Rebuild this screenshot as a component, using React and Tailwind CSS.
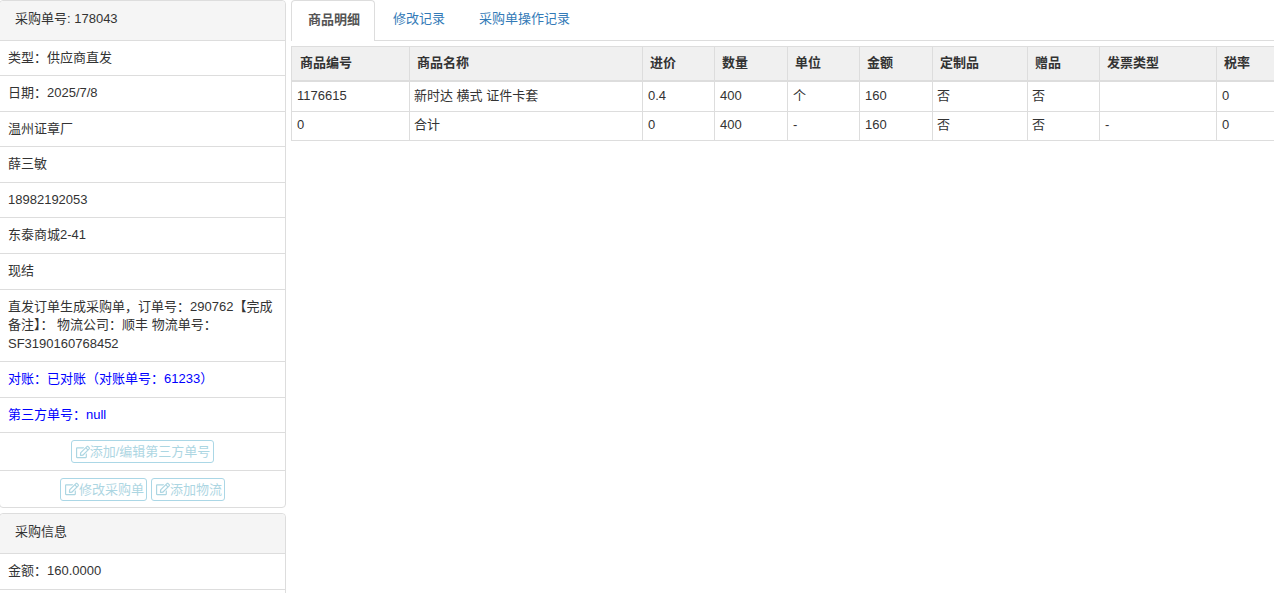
import { FaRegEdit } from "react-icons/fa";

const font = { fontFamily: '"Liberation Sans", "Noto Sans CJK SC", sans-serif' };

const infoRows = [
  "类型：供应商直发",
  "日期：2025/7/8",
  "温州证章厂",
  "薛三敏",
  "18982192053",
  "东泰商城2-41",
  "现结",
  "直发订单生成采购单，订单号：290762【完成备注】： 物流公司：顺丰 物流单号：SF3190160768452",
];

const headers = [
  ["商品编号", "w-[118px]"],
  ["商品名称", "w-[233px]"],
  ["进价", "w-[72px]"],
  ["数量", "w-[73px]"],
  ["单位", "w-[72px]"],
  ["金额", "w-[73px]"],
  ["定制品", "w-[95px]"],
  ["赠品", "w-[72px]"],
  ["发票类型", "w-[117px]"],
  ["税率", "w-[58px]"],
];

const rows = [
  ["1176615", "新时达 横式 证件卡套", "0.4", "400", "个", "160", "否", "否", "", "0"],
  ["0", "合计", "0", "400", "-", "160", "否", "否", "-", "0"],
];

const cjkCols = [1, 6, 7];

const Row = ({ children, className = "" }) => (
  <div className={`border-t border-[#ddd] px-2 pt-2 leading-[18.57px] ${className || "pb-2"}`}>{children}</div>
);

const EditButton = ({ label, className = "pr-[3px]" }) => (
  <span className={`inline-flex h-[23px] items-center rounded-[3px] border border-[#46a8c8] pl-[4px] text-[#4aa5c0] opacity-45 ${className}`}>
    <FaRegEdit className="text-[14px]" />
    {label}
  </span>
);

const App = () => {
  return (
    <div style={font} className="flex h-[593px] w-[1274px] overflow-hidden bg-white text-[13px] text-[#333]">

      {/* LEFT */}

      <div className="-ml-px w-[287px] shrink-0">
        <div className="rounded-[4px] border border-[#ddd]">
          <div className="h-[38.57px] rounded-t-[4px] bg-[#f5f5f5] px-[15px] py-[9px] leading-[18.57px]">
            采购单号: 178043
          </div>
          {infoRows.map((text) => (
            <Row key={text}>{text}</Row>
          ))}
          <Row className="pb-2 text-[#0000ff]">对账：已对账（对账单号：61233）</Row>
          <Row className="pb-2 text-[#0000ff]">第三方单号：null</Row>
          <div className="flex h-[38px] items-center justify-center border-t border-[#ddd]">
            <EditButton label="添加/编辑第三方单号" />
          </div>
          <div className="flex h-[37px] items-center justify-center gap-1 border-t border-[#ddd]">
            <EditButton label="修改采购单" className="pr-[2px]" />
            <EditButton label="添加物流" className="pr-[2px]" />
          </div>
        </div>

        <div className="mt-[5px] rounded-[4px] border border-[#ddd]">
          <div className="h-[38.57px] rounded-t-[4px] bg-[#f5f5f5] px-[15px] py-[9px] leading-[18.57px]">
            采购信息
          </div>
          <Row className="pb-[9px]">金额：160.0000</Row>
          <Row>&nbsp;</Row>
        </div>
      </div>

      {/* RIGHT */}

      <div className="ml-[5px] min-w-0 flex-1">
        <div className="flex h-[41px] border-b border-[#ddd]">
          <div className="h-[41px] rounded-t-[4px] border border-b-0 border-[#ddd] bg-white pl-4 pr-[14px] py-[10px] font-bold leading-[18.57px] text-[#555]">
            商品明细
          </div>
          <div className="px-[18px] py-[10px] leading-[18.57px] text-[#337ab7]">修改记录</div>
          <div className="px-4 py-[10px] leading-[18.57px] text-[#337ab7]">采购单操作记录</div>
        </div>

        <table className="mt-[5px] w-[983px] table-fixed border-collapse">
          <thead>
            <tr className="h-[34px] bg-[#f0f0f0]">
              {headers.map(([title, width]) => (
                <th key={title} className={`${width} border border-b-2 border-[#ddd] pb-[2px] pl-[7px] pr-2 text-left font-bold first:pl-2`}>
                  {title}
                </th>
              ))}
            </tr>
          </thead>
          <tbody>
            {rows.map((row, i) => (
              <tr key={i} className={i === 0 ? "h-[31px]" : "h-[29px]"}>
                {row.map((cell, j) => (
                  <td key={j} className={`border border-[#ddd] pb-[2px] pr-[5px] ${cjkCols.includes(j) ? "pl-[4px]" : "pl-[5px]"}`}>
                    {cell}
                  </td>
                ))}
              </tr>
            ))}
          </tbody>
        </table>
      </div>

    </div>
  );
};

export default App;
